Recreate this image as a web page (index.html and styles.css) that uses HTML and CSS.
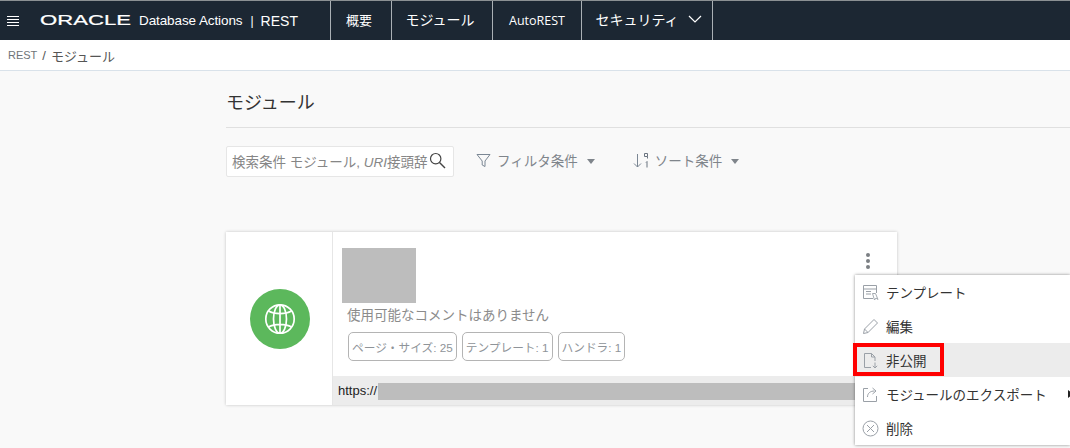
FILE: index.html
```html
<!DOCTYPE html>
<html lang="ja">
  <head>
    <meta charset="UTF-8" />
    <title>モジュール</title>
    <link rel="stylesheet" href="styles.css">
  </head>
  <body>
    <header class="topbar">
      <div class="brand">
        <span class="burger"><i></i><i></i><i></i><i></i></span>
        <span class="logo-wrap"><span class="logo">ORACLE</span></span>
        <span class="product">Database Actions</span>
        <span class="sep">|</span>
        <span class="product-sub">REST</span>
      </div>
      <nav class="nav">
        <a class="nav-item nav-first">概要</a>
        <a class="nav-item nav-modules">モジュール</a>
        <a class="nav-item nav-auto">AutoREST</a>
        <a class="nav-item nav-security">セキュリティ
          <svg class="nav-caret" width="14" height="8" viewBox="0 0 14 8"><path d="M1 1l6 6 6-6" fill="none" stroke="#fff" stroke-width="1.2"/></svg>
        </a>
      </nav>
    </header>

    <div class="crumbs">
      <span class="crumb-root">REST</span>
      <span class="crumb-sep">/</span>
      <span class="crumb-current">モジュール</span>
    </div>

    <main class="content">
      <h1 class="title">モジュール</h1>

      <!-- 検索とフィルタ -->
      <div class="toolbar">
        <div class="search">
          <span class="search-text">検索条件 モジュール, <em>URI</em>接頭辞</span>
          <svg class="search-icon" width="17" height="17" viewBox="0 0 17 17"><circle cx="6.7" cy="6.7" r="5.2" fill="none" stroke="#444" stroke-width="1.2"/><path d="M10.5 10.5l5.5 5.5" stroke="#444" stroke-width="1.4"/></svg>
        </div>
        <div class="tool tool-filter">
          <svg width="15" height="15" viewBox="0 0 15 15"><path d="M1 1.5h13L9 8v5.500L6.200 12V8z" fill="none" stroke="#7b8794" stroke-width="1"/></svg>
          <span>フィルタ条件</span>
          <i class="tri"></i>
        </div>
        <div class="tool tool-sort">
          <svg width="16" height="17" viewBox="0 0 16 17"><path d="M4.500 2v13M1 11.500l3.500 3.500L8 11.500" fill="none" stroke="#7b8794" stroke-width="1"/><path d="M11.500 1.500h3v3h-3zM14.500 4.500v2M13 10.500l1-1v6" fill="none" stroke="#6b7480" stroke-width="1"/></svg>
          <span>ソート条件</span>
          <i class="tri"></i>
        </div>
      </div>

      <section class="card">
        <div class="card-side">
          <span class="globe">
            <svg width="32" height="32" viewBox="0 0 32 32" fill="none" stroke="#fff" stroke-width="1.7"><circle cx="16" cy="16" r="14.200"/><ellipse cx="16" cy="16" rx="6.500" ry="14.200"/><path d="M16 2v28M4.500 8c6 3.500 17 3.500 23 0M4.500 24c6-3.500 17-3.500 23 0"/></svg>
          </span>
        </div>
        <div class="card-body">
          <div class="card-main">
            <div class="masked-name"></div>
            <p class="comment">使用可能なコメントはありません</p>
            <div class="chips">
              <span class="chip">ページ・サイズ: 25</span>
              <span class="chip">テンプレート: 1</span>
              <span class="chip">ハンドラ: 1</span>
            </div>
            <span class="kebab"><i></i><i></i><i></i></span>
          </div>
          <div class="card-url">
            <span>https://</span>
            <span class="masked-url"></span>
          </div>
        </div>
      </section>
    </main>

    <!-- アクションメニュー -->
    <ul class="menu">
      <li class="menu-item">
        <svg width="17" height="17" viewBox="0 0 17 17" fill="none" stroke="#9aa0a7"><path d="M11 14.500H1.500v-13h13V9"/><path d="M1.500 5h13M4 7.500h5M4 10h5"/><path d="M10.500 9.500h3l2.500 6-2-1.500-1.500 2z" stroke-width=".9"/></svg>
        <span>テンプレート</span>
      </li>
      <li class="menu-item">
        <svg width="17" height="17" viewBox="0 0 17 17" fill="none" stroke="#9aa0a7"><path d="M1.500 15.500l1-4.500L12 1.500l3.500 3.500L6 14.500zM2.500 11L6 14.500"/></svg>
        <span>編集</span>
      </li>
      <li class="menu-item menu-active">
        <svg width="17" height="17" viewBox="0 0 17 17" fill="none" stroke="#9aa0a7"><path d="M9 15.500H2.500v-14h7l3.500 3.500v4M9.500 1.500V5H13"/><path d="M13 10.500v5.500M10.800 13.800l2.200 2.200 2.200-2.200"/></svg>
        <span>非公開</span>
        <span class="highlight-box"></span>
      </li>
      <li class="menu-item">
        <svg width="17" height="17" viewBox="0 0 17 17" fill="none" stroke="#9aa0a7"><path d="M14.500 10v5.500h-13v-13H6"/><path d="M5.500 11c0-4 3-6 7-6M10.500 2l3.500 3-3.500 3"/></svg>
        <span>モジュールのエクスポート</span>
        <i class="menu-arrow"></i>
      </li>
      <li class="menu-item">
        <svg width="17" height="17" viewBox="0 0 17 17" fill="none" stroke="#9aa0a7"><circle cx="8.500" cy="8.500" r="7.500"/><path d="M5 5l7 7M12 5l-7 7"/></svg>
        <span>削除</span>
      </li>
    </ul>
  </body>
</html>
```

FILE: styles.css
```css
* {
  box-sizing: border-box;
}

body {
  margin: 0;
  height: 448px;
  overflow: hidden;
  position: relative;
  background: #f9f9f9;
  color: #333;
  font-family: "Liberation Sans", "Noto Sans CJK JP", sans-serif;
}

/* 上部バー */
.topbar {
  display: flex;
  height: 40px;
  background: #1c2733;
  border-top: 1px solid #8b9093;
  color: #fff;
}

.brand {
  display: flex;
  align-items: center;
  width: 330px;
  padding-left: 7px;
}

.burger {
  display: flex;
  flex-direction: column;
  gap: 2px;
  width: 12px;
}

.burger i {
  display: block;
  height: 1px;
  background: #fff;
}

.logo-wrap {
  display: block;
  width: 92px;
  margin-left: 21px;
}

.logo {
  display: block;
  width: 60px;
  font-size: 14px;
  line-height: 15px;
  font-weight: 400;
  -webkit-text-stroke: 0.2px #fff;
  transform: scale(1.58, 1);
  transform-origin: left center;
  white-space: nowrap;
}

.product {
  margin-left: 7px;
  font-size: 13.500px;
  letter-spacing: -0.1px;
}

.sep {
  margin-left: 8px;
  font-size: 12px;
}

.product-sub {
  margin-left: 7px;
  font-size: 14px;
}

.nav {
  display: flex;
}

.nav-item {
  display: flex;
  align-items: center;
  justify-content: center;
  gap: 9px;
  padding-bottom: 3px;
  border-left: 1px solid #aab0b5;
  font-size: 14px;
  white-space: nowrap;
}

.nav-first {
  width: 61px;
  padding-right: 4px;
  font-size: 13px;
}

.nav-modules {
  width: 101px;
  padding-right: 4px;
}

.nav-auto {
  width: 89px;
  padding-bottom: 0;
  font-size: 12.500px;
  font-family: "Open Sans", sans-serif;
}

.nav-security {
  width: 132px;
  padding-left: 3px;
  border-right: 1px solid #aab0b5;
}

/* パンくず */
.crumbs {
  display: flex;
  align-items: center;
  gap: 5px;
  height: 31px;
  padding-left: 8px;
  background: #fff;
  border-bottom: 1px solid #d9e2ea;
  font-size: 13px;
}

.crumb-root {
  color: #6f7478;
  font-size: 11px;
}

.crumb-sep {
  color: #555;
}

.crumb-current {
  color: #555;
}

/* 本文 */
.content {
  padding-left: 226px;
}

.title {
  margin: 0;
  height: 57px;
  padding-top: 18px;
  border-bottom: 1px solid #e0e0e0;
  font-size: 18px;
  line-height: 28px;
  font-weight: 400;
  color: #333;
}

.toolbar {
  display: flex;
  align-items: center;
  margin-top: 18px;
  height: 31px;
}

.search {
  display: flex;
  align-items: center;
  gap: 1px;
  width: 228px;
  height: 31px;
  padding: 0 0 2px 5px;
  background: #fff;
  border: 1px solid #e6e6e6;
  border-radius: 2px;
}

.search-text {
  width: 196px;
  overflow: hidden;
  white-space: nowrap;
  color: #868686;
  font-size: 13.500px;
}

.search-text em {
  font-style: italic;
}

.search-icon {
  flex: none;
}

.tool {
  display: flex;
  align-items: center;
  gap: 6px;
  padding-bottom: 3px;
  color: #7f858b;
  font-size: 13.500px;
}

.tool-filter {
  margin-left: 22px;
}

.tool-sort {
  margin-left: 38px;
}

.tri {
  display: block;
  width: 0;
  height: 0;
  margin: 2px 0 0 3px;
  border-left: 4px solid transparent;
  border-right: 4px solid transparent;
  border-top: 5px solid #7f858b;
}

/* カード */
.card {
  display: flex;
  width: 671px;
  height: 173px;
  margin-top: 55px;
  background: #fff;
  box-shadow: 0 0 3px rgba(0, 0, 0, 0.22);
}

.card-side {
  display: flex;
  align-items: center;
  justify-content: center;
  width: 107px;
  padding-left: 2px;
  border-right: 1px solid #e6e6e6;
}

.globe {
  display: flex;
  align-items: center;
  justify-content: center;
  width: 60px;
  height: 60px;
  margin-top: 1px;
  border-radius: 50%;
  background: #5cb85c;
}

.card-body {
  display: flex;
  flex-direction: column;
  flex: 1;
}

.card-main {
  position: relative;
  flex: 1;
  padding: 16px 0 0 9px;
}

.masked-name {
  width: 74px;
  height: 55px;
  background: #bdbdbd;
}

.comment {
  margin: 3px 0 0 5px;
  color: #8b8b8b;
  font-size: 13.500px;
  line-height: 20px;
}

.chips {
  display: flex;
  gap: 5px;
  margin: 6px 0 0 6px;
}

.chip {
  display: flex;
  align-items: center;
  height: 29px;
  padding: 0 3px;
  border: 1px solid #b4b4b4;
  border-radius: 5px;
  color: #8f9499;
  font-size: 11.700px;
  white-space: nowrap;
}

.kebab {
  position: absolute;
  top: 21px;
  right: 27px;
  display: flex;
  flex-direction: column;
  gap: 2px;
}

.kebab i {
  display: block;
  width: 4px;
  height: 4px;
  border-radius: 50%;
  background: #7b7f83;
}

.card-url {
  display: flex;
  align-items: center;
  height: 29px;
  padding: 0 0 0 5px;
  background: #ececec;
  color: #222;
  font-size: 13px;
}

.masked-url {
  width: 490px;
  height: 17px;
  margin: 1px 0 0 1px;
  background: #bdbdbd;
}

/* メニュー */
.menu {
  position: absolute;
  top: 275px;
  left: 855px;
  width: 215px;
  height: 170px;
  margin: 0;
  padding: 0;
  list-style: none;
  background: #fff;
  box-shadow: 0 0 3px rgba(0, 0, 0, 0.45);
}

.menu-item {
  position: relative;
  display: flex;
  align-items: center;
  gap: 7px;
  height: 34px;
  padding-left: 7px;
  color: #333;
  font-size: 13.500px;
  white-space: nowrap;
}

.menu-active {
  background: #ececec;
}

.highlight-box {
  position: absolute;
  top: 0;
  left: -2px;
  width: 91px;
  height: 33px;
  border: 4px solid #ff0000;
}

.menu-arrow {
  position: absolute;
  top: 13px;
  right: -3px;
  width: 0;
  height: 0;
  border-top: 4px solid transparent;
  border-bottom: 4px solid transparent;
  border-left: 5px solid #222;
}
```
